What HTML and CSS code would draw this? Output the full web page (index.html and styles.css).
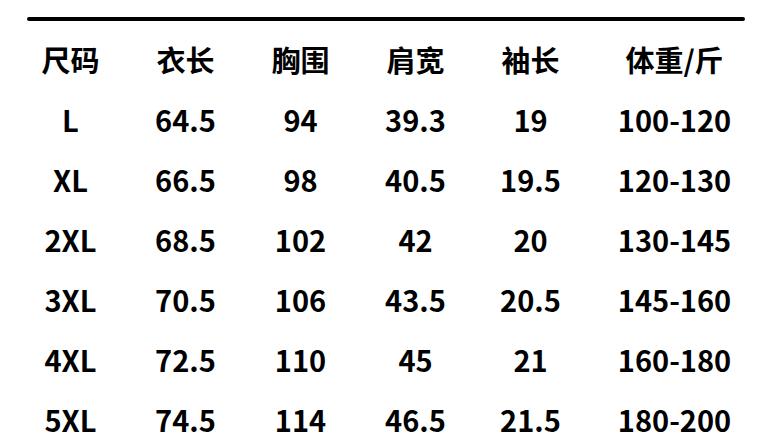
FILE: index.html
```html
<!DOCTYPE html>
<html lang="zh-CN">
<head>
<meta charset="utf-8">
<title>尺码表</title>
<link rel="stylesheet" href="styles.css">
</head>
<body>
<div class="chart">
  <div class="rule"></div>
  <div class="table">
    <div class="cell head">尺码</div><div class="cell head">衣长</div><div class="cell head">胸围</div><div class="cell head">肩宽</div><div class="cell head">袖长</div><div class="cell head">体重/斤</div>
    <div class="cell">L</div><div class="cell">64.5</div><div class="cell">94</div><div class="cell">39.3</div><div class="cell">19</div><div class="cell">100-120</div>
    <div class="cell">XL</div><div class="cell">66.5</div><div class="cell">98</div><div class="cell">40.5</div><div class="cell">19.5</div><div class="cell">120-130</div>
    <div class="cell">2XL</div><div class="cell">68.5</div><div class="cell">102</div><div class="cell">42</div><div class="cell">20</div><div class="cell">130-145</div>
    <div class="cell">3XL</div><div class="cell">70.5</div><div class="cell">106</div><div class="cell">43.5</div><div class="cell">20.5</div><div class="cell">145-160</div>
    <div class="cell">4XL</div><div class="cell">72.5</div><div class="cell">110</div><div class="cell">45</div><div class="cell">21</div><div class="cell">160-180</div>
    <div class="cell">5XL</div><div class="cell">74.5</div><div class="cell">114</div><div class="cell">46.5</div><div class="cell">21.5</div><div class="cell">180-200</div>
  </div>
</div>
</body>
</html>
```
FILE: styles.css
```css
html, body {
  margin: 0;
  padding: 0;
  background: #fff;
}
body {
  width: 778px;
  height: 440px;
  overflow: hidden;
  font-family: "Noto Sans CJK SC", "Noto Sans", sans-serif;
  font-weight: 700;
  color: #000;
}
.chart {
  padding-top: 17px;
}
.rule {
  margin-left: 27px;
  width: 718px;
  height: 4px;
  border-radius: 2px;
  background: #000;
}
.table {
  margin-top: 8px;
  margin-left: 13px;
  display: grid;
  grid-template-columns: 115px 115px 115px 115px 115px 173px;
  grid-auto-rows: 60px;
}
.cell {
  font-size: 29px;
  line-height: 60px;
  text-align: center;
  white-space: nowrap;
}
```
